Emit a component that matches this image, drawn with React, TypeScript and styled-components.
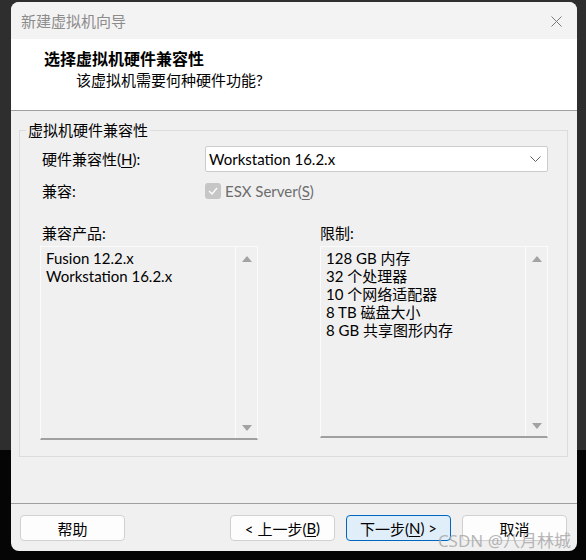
import styled, { createGlobalStyle } from "styled-components";

const GlobalStyle = createGlobalStyle`
  html, body {
    margin: 0;
    padding: 0;
  }
  body {
    width: 586px;
    height: 560px;
    overflow: hidden;
    background: linear-gradient(to bottom, #2e2e2e 0, #2e2e2e 450px, #050505 450px);
    font-family: "Lato", "Noto Sans CJK SC", sans-serif;
    font-size: 15px;
    color: #000;
  }
`;

const Window = styled.div`
  position: relative;
  margin: 2px 0 0 11px;
  width: 566px;
  height: 549px;
  border-radius: 8px;
  overflow: hidden;
  background: #f0f0f0;
  display: flex;
  flex-direction: column;
`;

const TitleBar = styled.div`
  height: 37px;
  flex: 0 0 37px;
  background: #f3f3f3;
  display: flex;
  align-items: center;
  justify-content: space-between;
  padding: 0 14px 0 10px;
  color: #8c8c8c;
`;

const CloseButton = styled.div`
  width: 14px;
  height: 14px;
  display: flex;
  align-items: center;
  justify-content: center;
  margin-top: 2px;
`;

const Header = styled.div`
  flex: 0 0 72px;
  background: #fff;
  border-bottom: 1px solid #a0a0a0;
  display: flex;
  flex-direction: column;
  padding: 9px 0 0 33px;
  box-sizing: border-box;
`;

const HeaderTitle = styled.div`
  font-weight: 700;
  font-size: 16px;
  line-height: 21px;
`;

const HeaderSub = styled.div`
  line-height: 20px;
  margin: 1px 0 0 32px;
`;

const Body = styled.div`
  flex: 1;
  padding: 9px 9px 0 8px;
`;

const Group = styled.fieldset`
  margin: 0;
  padding: 0 19px 16px 20px;
  border: 1px solid #dcdcdc;
  min-width: 0;
`;

const Legend = styled.legend`
  padding: 0 2px;
  margin-left: -14px;
  line-height: 20px;
`;

const FormRow = styled.div<{ $top: number }>`
  display: grid;
  grid-template-columns: 165px 1fr;
  align-items: center;
  margin-top: ${(p) => p.$top}px;
`;

const Label = styled.span`
  padding-left: 2px;
  line-height: 20px;
`;

const Select = styled.div`
  height: 26px;
  box-sizing: border-box;
  background: #fff;
  border: 1px solid #cccccc;
  border-radius: 2px;
  display: flex;
  align-items: center;
  justify-content: space-between;
  padding: 0 6px 0 3px;
`;

const CheckWrap = styled.div`
  display: flex;
  align-items: center;
  gap: 4px;
  color: #6d6d6d;
  line-height: 20px;
`;

const CheckBox = styled.span`
  width: 16px;
  height: 16px;
  border-radius: 3px;
  background: #c6c6c6;
  display: flex;
  align-items: center;
  justify-content: center;
`;

const Columns = styled.div`
  display: flex;
  justify-content: space-between;
  margin-top: 22px;
`;

const Column = styled.div<{ $width: number }>`
  width: ${(p) => p.$width}px;
  display: flex;
  flex-direction: column;
`;

const ColumnLabel = styled.span<{ $indent: number }>`
  padding-left: ${(p) => p.$indent}px;
  line-height: 20px;
  margin-bottom: 3px;
`;

const ListBox = styled.div<{ $height: number }>`
  height: ${(p) => p.$height}px;
  box-sizing: border-box;
  display: flex;
  background: #f0f0f0;
  border: 1px solid #fbfbfb;
  border-bottom: 2px solid #a0a0a0;
`;

const ListItems = styled.div`
  flex: 1;
  padding: 2px 0 0 5px;
  line-height: 18px;
`;

const ScrollBar = styled.div`
  width: 21px;
  border-left: 1px solid #fbfbfb;
  display: flex;
  flex-direction: column;
  justify-content: space-between;
  align-items: center;
  padding: 9px 0 7px;
`;

const Footer = styled.div`
  flex: 0 0 48px;
  box-sizing: border-box;
  border-top: 1px solid #a0a0a0;
  display: flex;
  align-items: flex-start;
  padding: 11px 10px 0 9px;
  gap: 11px;
`;

const Button = styled.div<{ $primary?: boolean }>`
  width: 105px;
  height: 26px;
  box-sizing: border-box;
  border-radius: 4px;
  border: 1px solid ${(p) => (p.$primary ? "#0067c0" : "#d0d0d0")};
  background: ${(p) => (p.$primary ? "#e0eef9" : "#fdfdfd")};
  display: flex;
  align-items: center;
  justify-content: center;
  &:first-child {
    margin-right: auto;
  }
`;

const Key = styled.span`
  text-decoration: underline;
  text-underline-offset: 2px;
`;

const Watermark = styled.div`
  position: absolute;
  right: 6px;
  bottom: 0;
  font-family: "Noto Sans", "Noto Sans CJK SC", sans-serif;
  font-size: 17px;
  line-height: 20px;
  color: rgba(170, 170, 170, 0.85);
`;

const Arrow = ({ down }: { down?: boolean }) => (
  <svg width="10" height="6" viewBox="0 0 10 6">
    <polygon points={down ? "0,0 10,0 5,6" : "0,6 10,6 5,0"} fill="#a3a3a3" />
  </svg>
);

const products = ["Fusion 12.2.x", "Workstation 16.2.x"];
const limits = [
  "128 GB 内存",
  "32 个处理器",
  "10 个网络适配器",
  "8 TB 磁盘大小",
  "8 GB 共享图形内存",
];

export default function App() {
  return (
    <>
      <GlobalStyle />
      <Window>
        <TitleBar>
          <span>新建虚拟机向导</span>
          <CloseButton>
            <svg width="11" height="11" viewBox="0 0 11 11">
              <path d="M0.5 0.5 L10.5 10.5 M10.5 0.5 L0.5 10.5" stroke="#7a7a7a" strokeWidth="1" />
            </svg>
          </CloseButton>
        </TitleBar>
        <Header>
          <HeaderTitle>选择虚拟机硬件兼容性</HeaderTitle>
          <HeaderSub>该虚拟机需要何种硬件功能?</HeaderSub>
        </Header>
        <Body>
          <Group>
            <Legend>虚拟机硬件兼容性</Legend>
            <FormRow $top={6}>
              <Label>
                硬件兼容性(<Key>H</Key>):
              </Label>
              <Select>
                <span>Workstation 16.2.x</span>
                <svg width="11" height="6" viewBox="0 0 11 6">
                  <polyline points="0.5,0.5 5.5,5.5 10.5,0.5" fill="none" stroke="#606060" strokeWidth="1" />
                </svg>
              </Select>
            </FormRow>
            <FormRow $top={9}>
              <Label>兼容:</Label>
              <CheckWrap>
                <CheckBox>
                  <svg width="10" height="8" viewBox="0 0 10 8">
                    <polyline points="1,4 4,7 9,1" fill="none" stroke="#fff" strokeWidth="1.3" />
                  </svg>
                </CheckBox>
                <span>
                  ESX Server(<Key>S</Key>)
                </span>
              </CheckWrap>
            </FormRow>
            <Columns>
              <Column $width={218}>
                <ColumnLabel $indent={2}>兼容产品:</ColumnLabel>
                <ListBox $height={194}>
                  <ListItems>
                    {products.map((p) => (
                      <div key={p}>{p}</div>
                    ))}
                  </ListItems>
                  <ScrollBar>
                    <Arrow />
                    <Arrow down />
                  </ScrollBar>
                </ListBox>
              </Column>
              <Column $width={228}>
                <ColumnLabel $indent={0}>限制:</ColumnLabel>
                <ListBox $height={192}>
                  <ListItems>
                    {limits.map((l) => (
                      <div key={l}>{l}</div>
                    ))}
                  </ListItems>
                  <ScrollBar>
                    <Arrow />
                    <Arrow down />
                  </ScrollBar>
                </ListBox>
              </Column>
            </Columns>
          </Group>
        </Body>
        <Footer>
          <Button>帮助</Button>
          <Button>
            &lt; 上一步(<Key>B</Key>)
          </Button>
          <Button $primary>
            下一步(<Key>N</Key>) &gt;
          </Button>
          <Button>取消</Button>
        </Footer>
        <Watermark>CSDN @八月林城</Watermark>
      </Window>
    </>
  );
}
